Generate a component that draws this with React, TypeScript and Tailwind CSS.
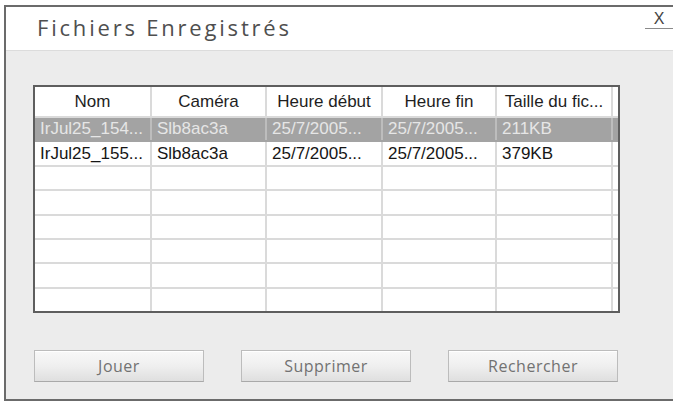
const cols = [
  { label: "Nom", w: "w-[117px]" },
  { label: "Caméra", w: "w-[115px]" },
  { label: "Heure début", w: "w-[116px]" },
  { label: "Heure fin", w: "w-[114px]" },
  { label: "Taille du fic...", w: "w-[116px]" },
];

const rows: string[][] = [
  ["IrJul25_154...", "Slb8ac3a", "25/7/2005...", "25/7/2005...", "211KB"],
  ["IrJul25_155...", "Slb8ac3a", "25/7/2005...", "25/7/2005...", "379KB"],
  ["", "", "", "", ""],
  ["", "", "", "", ""],
  ["", "", "", "", ""],
  ["", "", "", "", ""],
  ["", "", "", "", ""],
  ["", "", "", "", ""],
];

const Button = ({ label }: { label: string }) => (
  <button className="w-[170px] h-[32px] border border-[#bcbcbc] border-b-[#a9a9a9] bg-linear-to-b from-[#f8f8f8] via-[#efefef] to-[#dfdfdf] shadow-[inset_0_1px_0_#ffffff] text-[16px] text-[#727272] font-['Open_Sans',sans-serif] tracking-[0.5px]">
    {label}
  </button>
);

export default function App() {
  return (
    <div className="w-[673px] h-[401px] bg-white pl-[4px] pt-[5px] overflow-hidden">
      <div className="h-[396px] border-l-2 border-t-2 border-b-2 border-[#6b6b6b] flex flex-col">
        <div className="h-[44px] bg-white border-b border-[#dcdcdc] flex justify-between items-start">
          <h1 className="pl-[31px] pt-[5px] leading-[30px] text-[22px] text-[#4f4f4f] tracking-[2.8px] font-['Open_Sans',sans-serif]">
            Fichiers Enregistrés
          </h1>
          <div className="mt-[3px] w-[28px] h-[19px] leading-[17px] text-center text-[16px] text-[#444444] border-b border-[#8a8a8a] font-['Liberation_Sans',sans-serif]">
            X
          </div>
        </div>
        <div className="flex-1 bg-[#ececec] pl-[27px] pt-[34px]">
          <div className="w-[587px] h-[228px] border-2 border-[#5e5e5e] bg-white overflow-hidden font-['Liberation_Sans',Arial,sans-serif] text-[17px]">
            <div className="flex h-[31px] border-b-2 border-[#dadada]">
              {cols.map((c) => (
                <div
                  key={c.label}
                  className={`${c.w} shrink-0 border-r-2 border-[#dadada] flex items-center justify-center text-[#1e1e1e] whitespace-nowrap`}
                >
                  {c.label}
                </div>
              ))}
            </div>
            {rows.map((r, i) => {
              const sel = i === 0;
              return (
                <div
                  key={i}
                  className={`flex h-[24.4px] border-b-2 ${sel ? "bg-[#a3a3a3] border-[#a3a3a3]" : "border-[#dadada]"}`}
                >
                  {r.map((v, j) => (
                    <div
                      key={j}
                      className={`${cols[j].w} shrink-0 border-r-2 flex items-center pl-[5px] whitespace-nowrap ${sel ? "border-[#bdbdbd] text-[#e6e6e6]" : "border-[#dadada] text-[#161616]"}`}
                    >
                      {v}
                    </div>
                  ))}
                </div>
              );
            })}
          </div>
          <div className="w-[584px] ml-[1px] mt-[37px] flex justify-between">
            <Button label="Jouer" />
            <Button label="Supprimer" />
            <Button label="Rechercher" />
          </div>
        </div>
      </div>
    </div>
  );
}
